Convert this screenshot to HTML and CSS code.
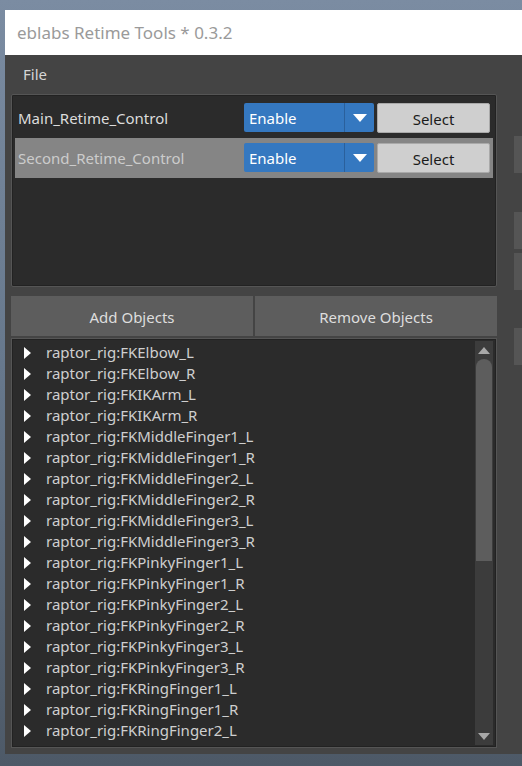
FILE: index.html
```html
<!DOCTYPE html>
<html>
<head>
<meta charset="utf-8">
<link rel="stylesheet" href="styles.css">
</head>
<body>
<div class="window">
  <div class="titlebar">eblabs Retime Tools * 0.3.2</div>
  <div class="menubar"><span class="menu-item">File</span></div>
  <div class="main">
    <div class="leftcol">
      <div class="panel">
        <div class="row">
          <div class="row-name">Main_Retime_Control</div>
          <div class="combo"><span class="combo-text">Enable</span><span class="combo-arrow"><svg width="14" height="8" viewBox="0 0 14 8"><polygon points="0,0 14,0 7,8" fill="#fff"/></svg></span></div>
          <div class="select-btn">Select</div>
        </div>
        <div class="row row-selected">
          <div class="row-name">Second_Retime_Control</div>
          <div class="combo"><span class="combo-text">Enable</span><span class="combo-arrow"><svg width="14" height="8" viewBox="0 0 14 8"><polygon points="0,0 14,0 7,8" fill="#fff"/></svg></span></div>
          <div class="select-btn">Select</div>
        </div>
      </div>
      <div class="buttons">
        <div class="btn">Add Objects</div>
        <div class="btn">Remove Objects</div>
      </div>
      <div class="list">
        <div class="items">
          <div class="item"><span class="tri"></span>raptor_rig:FKElbow_L</div>
          <div class="item"><span class="tri"></span>raptor_rig:FKElbow_R</div>
          <div class="item"><span class="tri"></span>raptor_rig:FKIKArm_L</div>
          <div class="item"><span class="tri"></span>raptor_rig:FKIKArm_R</div>
          <div class="item"><span class="tri"></span>raptor_rig:FKMiddleFinger1_L</div>
          <div class="item"><span class="tri"></span>raptor_rig:FKMiddleFinger1_R</div>
          <div class="item"><span class="tri"></span>raptor_rig:FKMiddleFinger2_L</div>
          <div class="item"><span class="tri"></span>raptor_rig:FKMiddleFinger2_R</div>
          <div class="item"><span class="tri"></span>raptor_rig:FKMiddleFinger3_L</div>
          <div class="item"><span class="tri"></span>raptor_rig:FKMiddleFinger3_R</div>
          <div class="item"><span class="tri"></span>raptor_rig:FKPinkyFinger1_L</div>
          <div class="item"><span class="tri"></span>raptor_rig:FKPinkyFinger1_R</div>
          <div class="item"><span class="tri"></span>raptor_rig:FKPinkyFinger2_L</div>
          <div class="item"><span class="tri"></span>raptor_rig:FKPinkyFinger2_R</div>
          <div class="item"><span class="tri"></span>raptor_rig:FKPinkyFinger3_L</div>
          <div class="item"><span class="tri"></span>raptor_rig:FKPinkyFinger3_R</div>
          <div class="item"><span class="tri"></span>raptor_rig:FKRingFinger1_L</div>
          <div class="item"><span class="tri"></span>raptor_rig:FKRingFinger1_R</div>
          <div class="item"><span class="tri"></span>raptor_rig:FKRingFinger2_L</div>
        </div>
        <div class="scrollbar">
          <div class="sb-arrow"><svg width="12" height="7" viewBox="0 0 12 7"><polygon points="6,0 12,7 0,7" fill="#a8a8a8"/></svg></div>
          <div class="sb-thumb"></div>
          <div class="sb-space"></div>
          <div class="sb-arrow"><svg width="12" height="7" viewBox="0 0 12 7"><polygon points="0,0 12,0 6,7" fill="#a8a8a8"/></svg></div>
        </div>
      </div>
    </div>
    <div class="rightcol">
      <div class="stub stub1"></div>
      <div class="stub stub2"></div>
      <div class="stub stub3"></div>
      <div class="stub stub4"></div>
    </div>
  </div>
</div>
</body>
</html>
```
FILE: styles.css
```css
html, body {
  margin: 0;
  padding: 0;
}
body {
  width: 522px;
  height: 766px;
  overflow: hidden;
  background: linear-gradient(to bottom, #7b8ca2 0%, #66778b 50%, #4d5967 100%);
  font-family: "Noto Sans", "Open Sans", sans-serif;
}
.window {
  margin-left: 5px;
  margin-top: 10px;
  width: 517px;
  height: 744px;
  background: #444444;
  overflow: hidden;
}
.titlebar {
  height: 45px;
  background: #ffffff;
  color: #9a9a9a;
  font-size: 17px;
  line-height: 46px;
  padding-left: 12px;
  box-sizing: border-box;
}
.menubar {
  height: 39px;
  line-height: 39px;
  padding-left: 18px;
  color: #d6d6d6;
  font-size: 15px;
}
.main {
  display: flex;
}
.leftcol {
  margin-left: 6px;
  width: 486px;
  display: flex;
  flex-direction: column;
}
.panel {
  height: 193px;
  box-sizing: border-box;
  border: 1px solid #555;
  border-radius: 2px;
  box-shadow: inset 0 0 0 1px #222;
  background: #2b2b2b;
  padding: 3px;
}
.row {
  height: 40px;
  display: flex;
  align-items: center;
  color: #dcdcdc;
  font-size: 15px;
}
.row-selected {
  background: #858585;
  color: #cccccc;
}
.row-name {
  flex: 1;
  padding-left: 3px;
}
.combo {
  width: 130px;
  height: 29px;
  background: #3578c0;
  border-radius: 2px;
  display: flex;
  color: #fff;
  margin-top: -1px;
}
.combo-text {
  flex: 1;
  line-height: 31px;
  padding-left: 5px;
}
.combo-arrow {
  width: 29px;
  border-left: 1px solid #2a609c;
  display: flex;
  align-items: center;
  justify-content: center;
}
.select-btn {
  width: 113px;
  height: 30px;
  box-sizing: border-box;
  margin-left: 3px;
  margin-right: 3px;
  background: #cfcfcf;
  border: 1px solid #a9a9a9;
  border-radius: 2px;
  color: #1a1a1a;
  text-align: center;
  line-height: 30px;
}
.buttons {
  margin-top: 9px;
  display: flex;
  gap: 2px;
  height: 40px;
}
.btn {
  flex: 1;
  background: #5d5d5d;
  color: #dedede;
  font-size: 15px;
  text-align: center;
  line-height: 42px;
}
.list {
  margin-top: 2px;
  height: 410px;
  box-sizing: border-box;
  border: 1px solid #555;
  box-shadow: inset 0 0 0 1px #222;
  background: #2b2b2b;
  display: flex;
  padding: 2px 3px 2px 2px;
  overflow: hidden;
}
.items {
  flex: 1;
  padding-top: 1px;
  overflow: hidden;
}
.item {
  height: 21px;
  line-height: 21px;
  font-size: 15px;
  color: #cfcfcf;
  display: flex;
  align-items: center;
  white-space: nowrap;
}
.tri {
  width: 0;
  height: 0;
  border-top: 6px solid transparent;
  border-bottom: 6px solid transparent;
  border-left: 7px solid #ffffff;
  margin-left: 10px;
  margin-right: 15px;
}
.scrollbar {
  width: 18px;
  background: #3c3c3c;
  display: flex;
  flex-direction: column;
  align-items: center;
}
.sb-arrow {
  height: 18px;
  display: flex;
  align-items: center;
  justify-content: center;
}
.sb-thumb {
  width: 16px;
  height: 202px;
  background: #5d5d5d;
  border-radius: 8px 8px 0 0;
}
.sb-space {
  flex: 1;
}
.rightcol {
  margin-left: 17px;
  flex: 1;
  display: flex;
  flex-direction: column;
}
.stub {
  background: #555555;
  height: 37px;
}
.stub1 { margin-top: 42px; }
.stub2 { margin-top: 39px; }
.stub3 { margin-top: 4px; }
.stub4 { margin-top: 38px; }
```
